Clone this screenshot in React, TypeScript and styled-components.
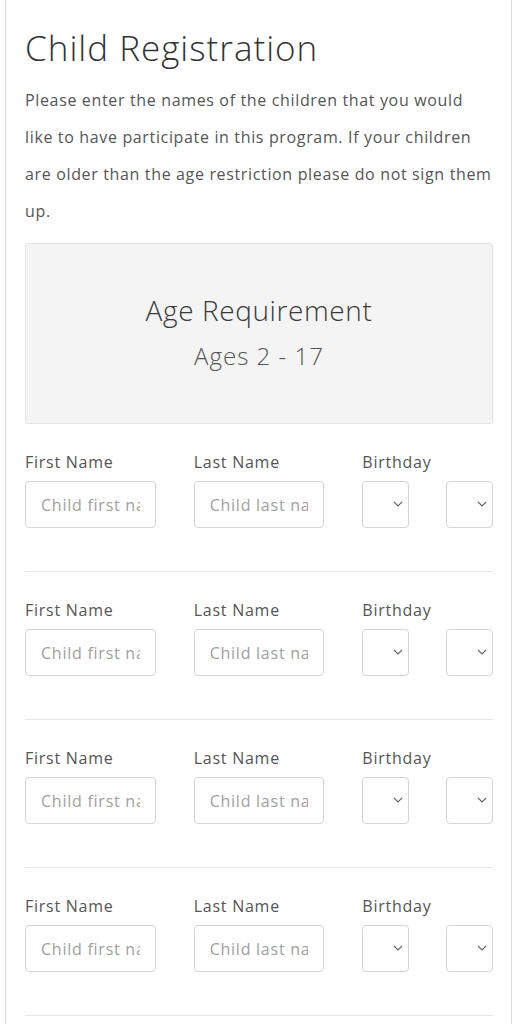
import React from "react";
import styled, { createGlobalStyle } from "styled-components";

const Global = createGlobalStyle`
  html, body { margin: 0; padding: 0; background: #fff; }
  body { font-family: "Open Sans", "Liberation Sans", sans-serif; color: #555; }
  * { box-sizing: border-box; }
`;

const Card = styled.div`
  margin-left: 5px;
  width: 507px;
  min-height: 1024px;
  border-left: 1px solid #dcdcdc;
  border-right: 1px solid #dcdcdc;
  padding: 29px 18px 0 19px;
`;

const Title = styled.h1`
  margin: 0;
  font-size: 35px;
  line-height: 38px;
  font-weight: 300;
  letter-spacing: 1px;
  color: #333;
`;

const Intro = styled.p`
  margin: 15px 0 0;
  font-size: 16px;
  line-height: 37px;
  letter-spacing: 0.65px;
  color: #555;
`;

const AgeBox = styled.div`
  margin-top: 13px;
  height: 181px;
  background: #f4f4f4;
  border: 1px solid #e4e4e4;
  border-radius: 3px;
  padding-bottom: 4px;
  display: flex;
  flex-direction: column;
  align-items: center;
  justify-content: center;
  gap: 14px;
  color: #444;
`;

const AgeTitle = styled.div`
  font-size: 28px;
  font-weight: 300;
  line-height: 34px;
  letter-spacing: 0.6px;
  color: #3a3a3a;
`;

const AgeRange = styled.div`
  font-size: 24px;
  font-weight: 300;
  line-height: 30px;
  letter-spacing: 1px;
  color: #555;
`;

const ChildRow = styled.div`
  display: grid;
  grid-template-columns: repeat(3, 1fr);
  column-gap: 38px;
  padding: 26px 0 43px;
  border-bottom: 1px solid #e8e8e8;
`;

const Field = styled.div`
  display: flex;
  flex-direction: column;
  gap: 7px;
`;

const Label = styled.label`
  font-size: 16px;
  line-height: 24px;
  letter-spacing: 0.75px;
  color: #555;
`;

const TextInput = styled.input`
  width: 100%;
  height: 47px;
  border: 1px solid #d4d4d4;
  border-radius: 4px;
  padding: 0 15px;
  font-family: inherit;
  font-size: 16px;
  letter-spacing: 0.75px;
  color: #555;
  outline: none;
  &::placeholder { color: #a0a0a0; }
`;

const SelectPair = styled.div`
  display: flex;
  justify-content: space-between;
`;

const SelectWrap = styled.div`
  position: relative;
  width: 47px;
  height: 47px;
`;

const Select = styled.select`
  appearance: none;
  -webkit-appearance: none;
  width: 100%;
  height: 100%;
  border: 1px solid #d4d4d4;
  border-radius: 4px;
  background: #fff;
  font-family: inherit;
  font-size: 16px;
  outline: none;
`;

const Chevron = styled.svg`
  position: absolute;
  right: 6px;
  top: 20px;
  width: 10px;
  height: 6px;
  pointer-events: none;
`;

const BirthSelect = () => (
  <SelectWrap>
    <Select defaultValue="">
      <option value=""></option>
    </Select>
    <Chevron viewBox="0 0 10 6">
      <path d="M1 1l4 4 4-4" fill="none" stroke="#666" strokeWidth="1.1" />
    </Chevron>
  </SelectWrap>
);

export default function App() {
  return (
    <>
      <Global />
      <Card>
        <Title>Child Registration</Title>
        <Intro>
          Please enter the names of the children that you would like to have
          participate in this program. If your children are older than the age
          restriction please do not sign them up.
        </Intro>
        <AgeBox>
          <AgeTitle>Age Requirement</AgeTitle>
          <AgeRange>Ages 2 - 17</AgeRange>
        </AgeBox>
        {[0, 1, 2, 3].map((i) => (
          <ChildRow key={i}>
            <Field>
              <Label>First Name</Label>
              <TextInput placeholder="Child first name" />
            </Field>
            <Field>
              <Label>Last Name</Label>
              <TextInput placeholder="Child last name" />
            </Field>
            <Field>
              <Label>Birthday</Label>
              <SelectPair>
                <BirthSelect />
                <BirthSelect />
              </SelectPair>
            </Field>
          </ChildRow>
        ))}
      </Card>
    </>
  );
}
